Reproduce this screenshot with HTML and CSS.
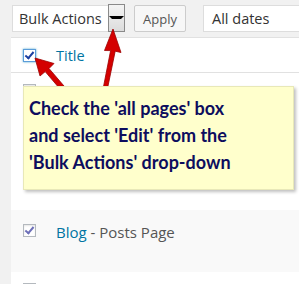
FILE: index.html
```html
<!DOCTYPE html>
<html lang="en">
  <head>
    <meta charset="UTF-8" />
    <title>Pages</title>
    <link rel="stylesheet" href="styles.css">
  </head>
  <body>
    <div class="toolbar">
      <div class="select bulk">
        <span>Bulk Actions</span>
        <div class="drop"><span class="tri"></span></div>
      </div>
      <div class="button">Apply</div>
      <div class="select dates"><span>All dates</span></div>
    </div>
    <div class="table">
      <div class="row head">
        <span class="check on"></span>
        <span class="title-link">Title</span>
      </div>
      <div class="row r1">
        <span class="check"></span>
        <span class="name"><a>About</a> — Parent Page</span>
      </div>
      <div class="row r2">
        <span class="check"></span>
      </div>
      <div class="row r3 alt">
        <span class="check on faded"></span>
        <span class="name"><a>Blog</a> - Posts Page</span>
      </div>
      <div class="row r4">
        <span class="check"></span>
      </div>
    </div>

    <svg class="arrows" width="299" height="284" viewBox="0 0 299 284">
      <g fill="#d40000" stroke="#9c0000" stroke-width="0.8" stroke-linejoin="round">
        <path d="M35 58 L54 63.5 L49 68.5 L64 86 L60 89 L45.2 71.6 L40 76 Z" />
        <path d="M113 29 L121 52.5 L115.2 51.2 L107.6 88 L103.4 87.2 L110.6 50.6 L104.5 50.5 Z" />
      </g>
    </svg>

    <div class="callout">
      Check the 'all pages' box<br />
      and select 'Edit' from the<br />
      'Bulk Actions' drop-down
    </div>
  </body>
</html>
```

FILE: styles.css
```css
body {
  margin: 0;
  width: 299px;
  height: 284px;
  overflow: hidden;
  background: #f1f1f1;
  font-family: "Open Sans", sans-serif;
  color: #444;
  position: relative;
}
.toolbar {
  display: flex;
  align-items: center;
  height: 37px;
  padding-left: 12px;
}
.select {
  height: 25px;
  background: #fff;
  border: 1px solid #ddd;
  display: flex;
  align-items: center;
  font-size: 14.5px;
  color: #333;
  box-sizing: content-box;
}
.bulk {
  width: 105px;
  padding-left: 6px;
}
.bulk span {
  flex: 1;
}
.drop {
  width: 15px;
  height: 26px;
  margin-top: -2px;
  margin-right: -1px;
  background: linear-gradient(#f4f4f4, #dcdcdc);
  border: 1px solid #8a8a8a;
  display: flex;
  align-items: center;
  justify-content: center;
}
.tri {
  width: 0;
  height: 0;
  border-left: 3px solid transparent;
  border-right: 3px solid transparent;
  border-top: 3px solid #000;
}
.button {
  margin-left: 9px;
  height: 25px;
  width: 50px;
  background: #f7f7f7;
  border: 1px solid #ccc;
  border-radius: 2px;
  font-size: 13px;
  color: #555;
  display: flex;
  align-items: center;
  justify-content: center;
}
.dates {
  margin-left: 17px;
  flex: 1;
  padding-left: 8px;
  border-right: none;
}
.table {
  margin-left: 11px;
  background: #fff;
  border-top: 1px solid #e1e1e1;
}
.row {
  display: flex;
  align-items: flex-start;
  padding-left: 12px;
  box-sizing: border-box;
}
.head {
  height: 35px;
  align-items: center;
  border-bottom: 1px solid #e1e1e1;
}
.r1 { height: 68px; padding-top: 11px; }
.r2 { height: 69px; padding-top: 11px; }
.r3 { height: 62px; padding-top: 14px; }
.r4 { height: 12px; padding-top: 11px; }
.alt { background: #f9f9f9; }
.check {
  width: 11px;
  height: 11px;
  border: 1px solid #b4b9be;
  background: #fff;
  box-shadow: inset 0 1px 2px rgba(0, 0, 0, 0.1);
  position: relative;
  flex: none;
}
.head .check {
  border-color: #5b9dd9;
  box-shadow: 0 0 2px rgba(30, 140, 190, 0.8);
}
.check.on::after {
  content: "";
  position: absolute;
  left: 3px;
  top: 0;
  width: 3px;
  height: 7px;
  border-right: 2px solid #1a3fa0;
  border-bottom: 2px solid #1a3fa0;
  transform: rotate(40deg);
}
.check.faded::after {
  border-color: #6d6fb8;
}
.title-link {
  margin-left: 20px;
  font-size: 14.5px;
  color: #0074a2;
}
.name {
  margin-left: 20px;
  font-size: 15px;
  line-height: 16px;
  color: #555;
}
.name a {
  color: #0074a2;
}
.arrows {
  position: absolute;
  left: 0;
  top: 0;
}
.callout {
  position: absolute;
  left: 23px;
  top: 86px;
  width: 264px;
  height: 94px;
  padding-left: 5px;
  padding-top: 8px;
  background: #ffffcc;
  border: 1px solid #e8e8b8;
  box-shadow: 2px 2px 3px rgba(0, 0, 0, 0.25);
  font-family: Lato, sans-serif;
  font-weight: 700;
  font-size: 18px;
  line-height: 27px;
  color: #0d0d5e;
}
```
